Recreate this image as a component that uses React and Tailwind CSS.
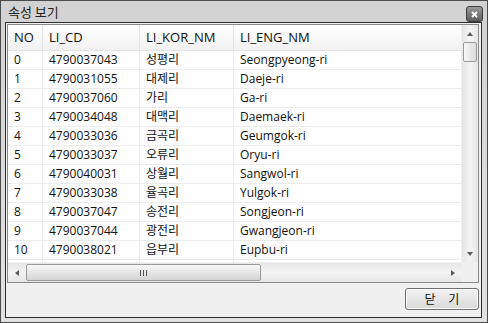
import React from 'react';

const ROWS = [
  ['0', '4790037043', '성평리', 'Seongpyeong-ri'],
  ['1', '4790031055', '대제리', 'Daeje-ri'],
  ['2', '4790037060', '가리', 'Ga-ri'],
  ['3', '4790034048', '대맥리', 'Daemaek-ri'],
  ['4', '4790033036', '금곡리', 'Geumgok-ri'],
  ['5', '4790033037', '오류리', 'Oryu-ri'],
  ['6', '4790040031', '상월리', 'Sangwol-ri'],
  ['7', '4790033038', '율곡리', 'Yulgok-ri'],
  ['8', '4790037047', '송전리', 'Songjeon-ri'],
  ['9', '4790037044', '광전리', 'Gwangjeon-ri'],
  ['10', '4790038021', '읍부리', 'Eupbu-ri'],
  ['', '', '', ''],
];

const COLS = ['w-[35px]', 'w-[97px]', 'w-[94px]', 'w-[228px]'];
const HEADS = ['NO', 'LI_CD', 'LI_KOR_NM', 'LI_ENG_NM'];

function Arrow({ dir }) {
  const pts = {
    up: '1,5 4,1 7,5',
    down: '1,1 4,5 7,1',
    left: '5,1 1,4 5,7',
    right: '1,1 5,4 1,7',
  }[dir];
  const vert = dir === 'up' || dir === 'down';
  return (
    <svg width={vert ? 8 : 6} height={vert ? 6 : 8} viewBox={vert ? '0 0 8 6' : '0 0 6 8'}>
      <polygon points={pts} fill="#5a5a5a" />
    </svg>
  );
}

export default function App() {
  return (
    <div className="w-[488px] h-[323px] flex flex-col border border-[#4c4c4c] bg-gradient-to-b from-[#d2d2d2] to-[#e2e2e2] pl-[4px] pr-[5px] pb-[4px] font-['Open_Sans','Noto_Sans_CJK_KR',sans-serif] text-[12px] text-[#111] overflow-hidden">
      {/* title bar */}
      <div className="h-[21px] flex items-center justify-between shrink-0">
        <span className="pl-[3px] pt-[1px] text-[13px] text-[#222] font-['Noto_Sans_CJK_KR',sans-serif]">속성 보기</span>
        <div className="w-[17px] h-[16px] -mr-[1px] mt-[5px] rounded-[3px] border border-[#3e3e3e] bg-gradient-to-b from-[#9a9a9a] to-[#5e5e5e] flex items-center justify-center">
          <svg width="7" height="7" viewBox="0 0 7 7">
            <path d="M1 1 L6 6 M6 1 L1 6" stroke="#fff" strokeWidth="1.8" />
          </svg>
        </div>
      </div>

      {/* client */}
      <div className="flex-1 flex flex-col border border-[#2e2e2e] bg-[#f0f0f0] p-[1px]">
        <div className="h-[259px] flex flex-col border border-[#8a8a8a] bg-white shrink-0 mr-[1px]">
          <div className="h-[237px] flex">
            <div className="flex-1 flex flex-col overflow-hidden">
              <div className="h-[26px] shrink-0 flex bg-gradient-to-b from-white to-[#f2f2f2] border-b border-[#e3e3e3]">
                {HEADS.map((h, i) => (
                  <div key={h} className={`${COLS[i]} shrink-0 flex items-center pl-[6px] border-r border-[#e3e3e3] text-[13px]`}>
                    {h}
                  </div>
                ))}
              </div>
              {ROWS.map((r, n) => (
                <div key={n} className="h-[19px] shrink-0 flex border-b border-[#ececec]">
                  {r.map((c, i) => (
                    <div key={i} className={`${COLS[i]} shrink-0 flex items-center pl-[6px] border-r border-[#ececec] whitespace-nowrap`}>
                      {c}
                    </div>
                  ))}
                </div>
              ))}
            </div>
            {/* vertical scrollbar */}
            <div className="w-[17px] shrink-0 flex flex-col bg-gradient-to-r from-[#e6e6e6] via-[#f4f4f4] to-[#e6e6e6] border-l border-[#f0f0f0]">
              <div className="h-[17px] flex items-center justify-center"><Arrow dir="up" /></div>
              <div className="mx-[1px] h-[20px] rounded-[2px] border border-[#9b9b9b] bg-gradient-to-r from-[#f8f8f8] to-[#dcdcdc]" />
              <div className="flex-1" />
              <div className="h-[17px] flex items-center justify-center"><Arrow dir="down" /></div>
            </div>
          </div>
          {/* horizontal scrollbar */}
          <div className="h-[20px] flex bg-gradient-to-b from-[#e6e6e6] via-[#f4f4f4] to-[#e6e6e6] border-t border-[#f0f0f0]">
            <div className="w-[17px] flex items-center justify-center"><Arrow dir="left" /></div>
            <div className="w-[235px] my-[1px] ml-[1px] rounded-[2px] border border-[#9b9b9b] bg-gradient-to-b from-[#f8f8f8] to-[#d4d4d4] flex items-center justify-center gap-[2px]">
              <span className="w-[1px] h-[6px] bg-[#555]" />
              <span className="w-[1px] h-[6px] bg-[#555]" />
              <span className="w-[1px] h-[6px] bg-[#555]" />
            </div>
            <div className="flex-1" />
            <div className="w-[17px] flex items-center justify-center"><Arrow dir="right" /></div>
            <div className="w-[17px] bg-[#f0f0f0]" />
          </div>
        </div>

        {/* button row */}
        <div className="flex-1 flex items-start justify-end pt-[5px] pr-[1px]">
          <button className="w-[74px] h-[22px] rounded-[3px] border border-[#707070] bg-gradient-to-b from-[#f4f4f4] to-[#d9d9d9] shadow-[inset_0_0_0_1px_#fcfcfc] text-[12px] text-[#111] font-['Noto_Sans_CJK_KR',sans-serif] tracking-[5px] pl-[5px]">
            닫 기
          </button>
        </div>
      </div>
    </div>
  );
}
